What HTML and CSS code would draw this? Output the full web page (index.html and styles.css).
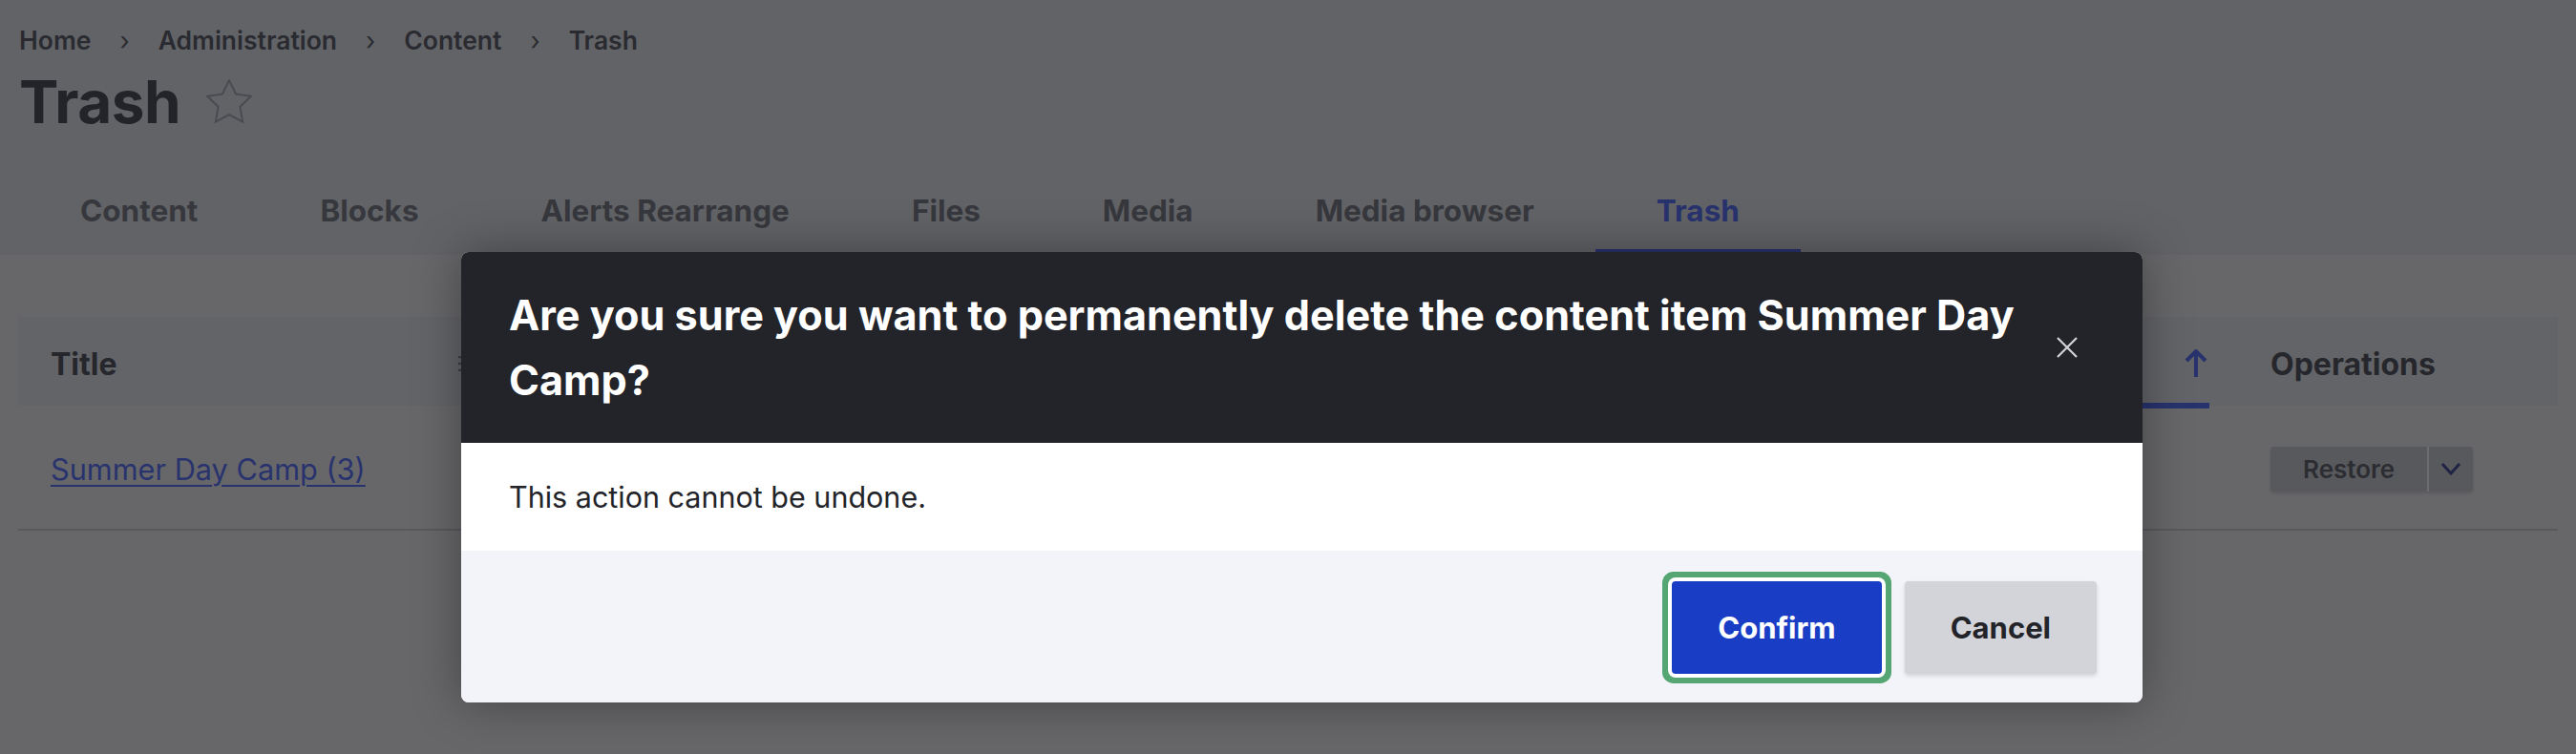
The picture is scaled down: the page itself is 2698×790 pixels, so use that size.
FILE: index.html
```html
<!DOCTYPE html>
<html lang="en">
<head>
<meta charset="utf-8">
<title>Trash</title>
<link rel="stylesheet" href="styles.css">
</head>
<body>
<div class="page">
  <header class="page-header">
    <nav class="breadcrumb" aria-label="Breadcrumb">
      <a href="#">Home</a><span class="sep">›</span>
      <a href="#">Administration</a><span class="sep">›</span>
      <a href="#">Content</a><span class="sep">›</span>
      <a href="#">Trash</a>
    </nav>
    <div class="title-row">
      <h1 class="page-title">Trash</h1>
      <svg class="star" viewBox="1.5 1.5 21 21" aria-hidden="true"><polygon points="12,2 15.09,8.26 22,9.27 17,14.14 18.18,21.02 12,17.77 5.82,21.02 7,14.14 2,9.27 8.91,8.26"/></svg>
    </div>
    <nav class="tabs">
      <a class="tab" href="#">Content</a>
      <a class="tab" href="#">Blocks</a>
      <a class="tab" href="#">Alerts Rearrange</a>
      <a class="tab" href="#">Files</a>
      <a class="tab" href="#">Media</a>
      <a class="tab" href="#">Media browser</a>
      <a class="tab active" href="#">Trash</a>
    </nav>
  </header>
  <main class="content">
    <table class="trash-table">
      <colgroup>
        <col class="c-title"><col class="c-type"><col class="c-by"><col class="c-deleted"><col class="c-ops">
      </colgroup>
      <thead>
        <tr>
          <th><span class="th-inner">Title <svg class="sort-icon" viewBox="0 0 14 16"><path d="M0 1h14M0 8h10M0 15h6"/></svg></span></th>
          <th></th>
          <th></th>
          <th class="sorted"><span class="th-inner th-end"><svg class="sort-arrow" viewBox="0 0 24 30"><path d="M12 29V3M2 12L12 2l10 10"/></svg></span></th>
          <th class="ops">Operations</th>
        </tr>
      </thead>
      <tbody>
        <tr>
          <td><a class="row-link" href="#">Summer Day Camp (3)</a></td>
          <td></td>
          <td></td>
          <td></td>
          <td class="ops">
            <div class="dropbutton">
              <a class="drop-main" href="#">Restore</a>
              <button class="drop-toggle" type="button" aria-label="More actions"><svg viewBox="0 0 22 14"><path d="M2 2l9 10 9-10"/></svg></button>
            </div>
          </td>
        </tr>
      </tbody>
    </table>
  </main>
</div>

<div class="dialog" role="dialog" aria-labelledby="dlg-title">
  <div class="dialog-header">
    <h2 class="dialog-title" id="dlg-title">Are you sure you want to permanently delete the content item Summer Day Camp?</h2>
    <button class="dialog-close" type="button" aria-label="Close"><svg viewBox="0 0 22 22"><path d="M1 1l20 20M21 1L1 21"/></svg></button>
  </div>
  <div class="dialog-body">This action cannot be undone.</div>
  <div class="dialog-footer">
    <button class="btn btn-primary" type="button">Confirm</button>
    <button class="btn btn-secondary" type="button">Cancel</button>
  </div>
</div>
</body>
</html>
```

FILE: styles.css
```css
html, body {
  margin: 0;
  padding: 0;
}
body {
  width: 2698px;
  height: 790px;
  overflow: hidden;
  background: #67676a;
  font-family: Inter, "Noto Sans", sans-serif;
  color: #232429;
  position: relative;
}
a { text-decoration: none; color: inherit; }

.page-header {
  background: #626367;
  padding: 22px 20px 0 20px;
}

.breadcrumb {
  display: flex;
  align-items: center;
  height: 40px;
  font-size: 26.5px;
  font-weight: 600;
  color: #2a2b30;
}
.breadcrumb .sep {
  font-weight: 400;
  margin: 0 30px;
  color: #2a2b30;
}

.title-row {
  display: flex;
  align-items: center;
  margin-top: 5px;
  height: 80px;
}
.page-title {
  margin: 0;
  font-size: 62px;
  line-height: 80px;
  font-weight: 700;
  color: #232429;
  letter-spacing: -0.5px;
}
.star {
  width: 48px;
  height: 48px;
  margin-left: 27px;
  fill: none;
  stroke: #4a4b50;
  stroke-width: 0.9;
}

.tabs {
  display: flex;
  margin-top: 24px;
  height: 96px;
}
.tab {
  display: flex;
  align-items: center;
  padding: 9px 64px 0;
  font-size: 31.5px;
  font-weight: 700;
  color: #37383d;
  border-bottom: 6px solid transparent;
}
.tab.active {
  color: #28336e;
  border-bottom-color: #28336e;
}

.content {
  padding: 65px 19px 0 19px;
}
.trash-table {
  width: 2660px;
  table-layout: fixed;
  border-collapse: collapse;
}
.c-title { width: 478px; }
.c-type { width: 603px; }
.c-by { width: 600px; }
.c-deleted { width: 614px; }
.c-ops { width: 365px; }

.trash-table thead tr {
  background: #636468;
}
.trash-table th {
  height: 82px;
  padding: 8px 0 0 34px;
  text-align: left;
  font-size: 32px;
  font-weight: 700;
  color: #26272c;
  border-bottom: 6px solid transparent;
  white-space: nowrap;
}
.th-inner {
  display: flex;
  align-items: center;
  justify-content: space-between;
}
.th-end {
  justify-content: flex-end;
}
.sort-icon {
  width: 14px;
  height: 16px;
  margin-right: 3px;
  stroke: #3e3f44;
  stroke-width: 2.5;
  fill: none;
}
.trash-table th.sorted {
  border-bottom-color: #28336e;
  padding-right: 2px;
}
.sort-arrow {
  width: 24px;
  height: 30px;
  stroke: #28336e;
  stroke-width: 4;
  fill: none;
}
.trash-table th.ops,
.trash-table td.ops {
  padding-left: 64px;
}

.trash-table td {
  height: 126px;
  padding: 0 0 0 34px;
  border-bottom: 2px solid #58595d;
  font-size: 30.7px;
  color: #26272c;
  white-space: nowrap;
}
.row-link {
  color: #28336e;
  text-decoration: underline;
  text-decoration-thickness: 2px;
  text-underline-offset: 5px;
}

.dropbutton {
  display: inline-flex;
  height: 47px;
  border-radius: 4px;
  background: #58595d;
  box-shadow: 0 2px 3px rgba(0,0,0,0.12);
}
.drop-main {
  display: flex;
  align-items: center;
  padding: 0 34px;
  font-size: 26px;
  font-weight: 600;
  color: #2c2d32;
  border-right: 2px solid #6c6d71;
}
.drop-toggle {
  width: 46px;
  border: 0;
  background: transparent;
  padding: 0;
  display: flex;
  align-items: center;
  justify-content: center;
}
.drop-toggle svg {
  width: 22px;
  height: 14px;
  fill: none;
  stroke: #1f2444;
  stroke-width: 3;
}

/* Dialog */
.dialog {
  position: absolute;
  left: 483px;
  top: 264px;
  width: 1761px;
  border-radius: 8px;
  overflow: hidden;
  background: #fff;
  box-shadow: 0 0 50px rgba(0,0,0,0.35);
}
.dialog-header {
  display: flex;
  align-items: center;
  background: #232429;
  padding: 32px 54px 32px 50px;
}
.dialog-title {
  flex: 1;
  margin: 0;
  font-size: 43.2px;
  line-height: 68px;
  font-weight: 700;
  color: #fff;
}
.dialog-close {
  width: 50px;
  height: 50px;
  border: 0;
  padding: 0;
  background: transparent;
  display: flex;
  align-items: center;
  justify-content: center;
}
.dialog-close svg {
  width: 22px;
  height: 22px;
  stroke: #d3d4d9;
  stroke-width: 2.2;
  fill: none;
}
.dialog-body {
  padding: 32px 50px;
  font-size: 30.5px;
  line-height: 49px;
  color: #232429;
}
.dialog-footer {
  display: flex;
  justify-content: flex-end;
  gap: 24px;
  background: #f3f4f9;
  padding: 32px 48px 30px;
}
.btn {
  height: 97px;
  padding: 0 48px;
  border: 0;
  border-radius: 4px;
  font-family: Inter, "Noto Sans", sans-serif;
  font-size: 31px;
  font-weight: 700;
}
.btn-primary {
  background: #193dc5;
  color: #fff;
  box-shadow: 0 0 0 4px #fff, 0 0 0 10px #55a672;
}
.btn-secondary {
  background: #d3d4d9;
  color: #232429;
  box-shadow: 0 2px 4px rgba(0,0,0,0.15);
}
```
